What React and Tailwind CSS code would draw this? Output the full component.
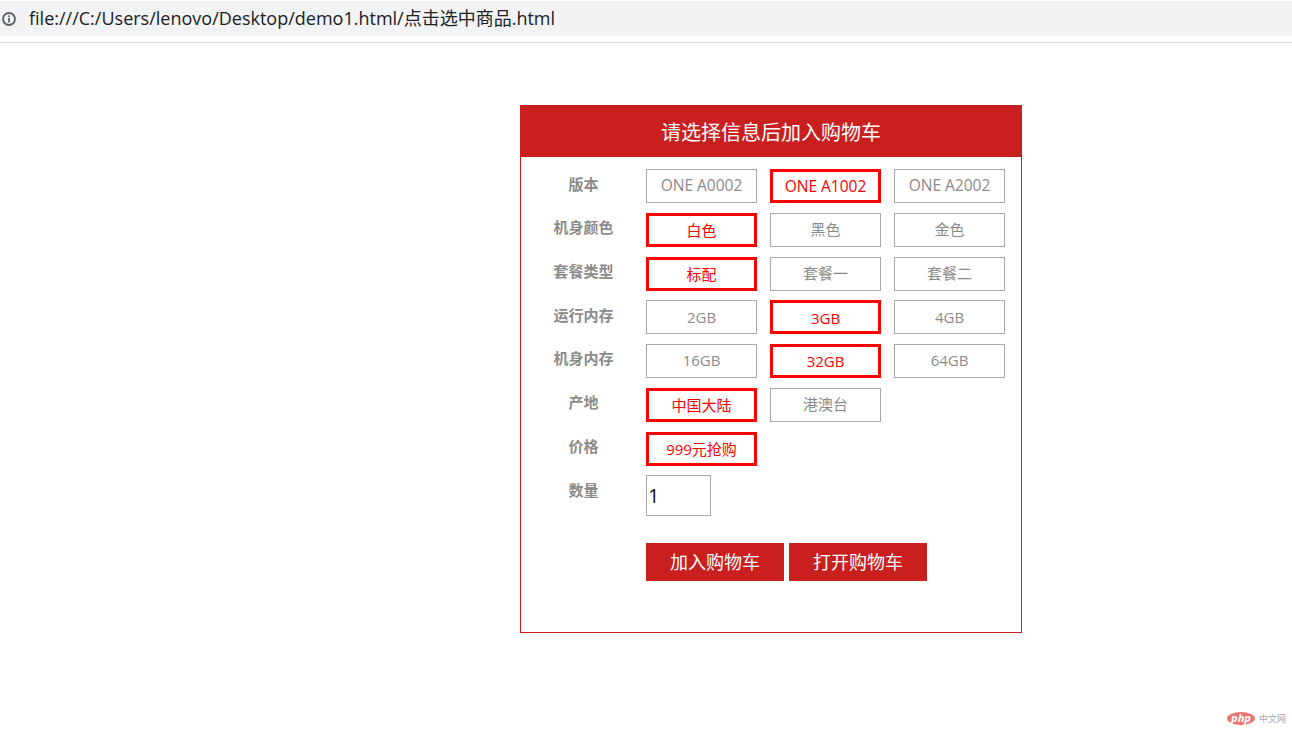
import React from "react";

const rows = [
  { label: "版本", options: ["ONE A0002", "ONE A1002", "ONE A2002"], active: 1 },
  { label: "机身颜色", options: ["白色", "黑色", "金色"], active: 0 },
  { label: "套餐类型", options: ["标配", "套餐一", "套餐二"], active: 0 },
  { label: "运行内存", options: ["2GB", "3GB", "4GB"], active: 1 },
  { label: "机身内存", options: ["16GB", "32GB", "64GB"], active: 1 },
  { label: "产地", options: ["中国大陆", "港澳台"], active: 0 },
  { label: "价格", options: ["999元抢购"], active: 0 },
];

const font = "font-['Open_Sans','Noto_Sans_CJK_SC',sans-serif]";

const Option = ({ text, active }) => (
  <div
    className={
      active
        ? "w-[111px] h-[34px] flex items-center justify-center border-[3px] border-[#ff0000] text-[#ff0000] text-[15px] pt-[1px]"
        : "w-[111px] h-[34px] flex items-center justify-center border border-[#a9a7a7] text-[#8b8b8b] text-[15px] pb-[1px]"
    }
  >
    <span className={text.startsWith("ONE") ? "text-[15.5px]" : ""}>{text}</span>
  </div>
);

const App = () => {
  return (
    <div className={`relative w-[1292px] h-[729px] bg-white overflow-hidden ${font}`}>
      <div className="pt-[1px] h-[43px] border-b border-[#dcdcdc]">
        <div className="h-[35px] bg-[#f1f3f4] flex items-center text-[#202124] text-[18px]">
          <svg width="16" height="16" viewBox="0 0 16 16" className="ml-[1px] mr-[12px]">
            <circle cx="8" cy="8" r="6" fill="none" stroke="#5f6368" strokeWidth="1.8" />
            <rect x="7.1" y="7" width="1.8" height="4.5" fill="#5f6368" />
            <rect x="7.1" y="4.4" width="1.8" height="1.7" fill="#5f6368" />
          </svg>
          <span>file:///C:/Users/lenovo/Desktop/demo1.html/点击选中商品.html</span>
        </div>
      </div>

      <div className="ml-[520px] mt-[62px] w-[502px] h-[528px] border border-[#c91f1f] border-t-0">
        <div className="h-[52px] -mx-[1px] bg-[#c91f1f] text-white text-[20px] pt-[3px] flex items-center justify-center">
          请选择信息后加入购物车
        </div>

        <div className="pt-[12.4px]">
          {rows.map((row) => (
            <div key={row.label} className="flex h-[43.7px]">
              <div className="w-[125px] h-[29px] flex items-center justify-center font-bold text-[15px] text-[#8b8b8b]">
                {row.label}
              </div>
              <div className="flex gap-[13px]">
                {row.options.map((opt, i) => (
                  <Option key={opt} text={opt} active={i === row.active} />
                ))}
              </div>
            </div>
          ))}

          <div className="flex">
            <div className="w-[125px] h-[31px] flex items-center justify-center font-bold text-[15px] text-[#8b8b8b]">
              数量
            </div>
            <input
              defaultValue="1"
              className="w-[65px] h-[41px] border border-[#a9a7a7] text-[20px] text-[#111111] pl-[1px] outline-none"
            />
          </div>

          <div className="flex gap-[5px] ml-[125px] mt-[27px]">
            <button className="w-[138px] h-[38px] bg-[#c91f1f] text-white text-[18px]">加入购物车</button>
            <button className="w-[138px] h-[38px] bg-[#c91f1f] text-white text-[18px]">打开购物车</button>
          </div>
        </div>
      </div>

      <div className="absolute right-[6px] bottom-[4px] flex items-center gap-[4px]">
        <span className="w-[28px] h-[13px] rounded-[50%] bg-[#ea7472] text-white text-[11px] italic font-bold leading-[12px] text-center">
          php
        </span>
        <span className="text-[9px] text-[#a8a8a8]">中文网</span>
      </div>
    </div>
  );
};

export default App;
